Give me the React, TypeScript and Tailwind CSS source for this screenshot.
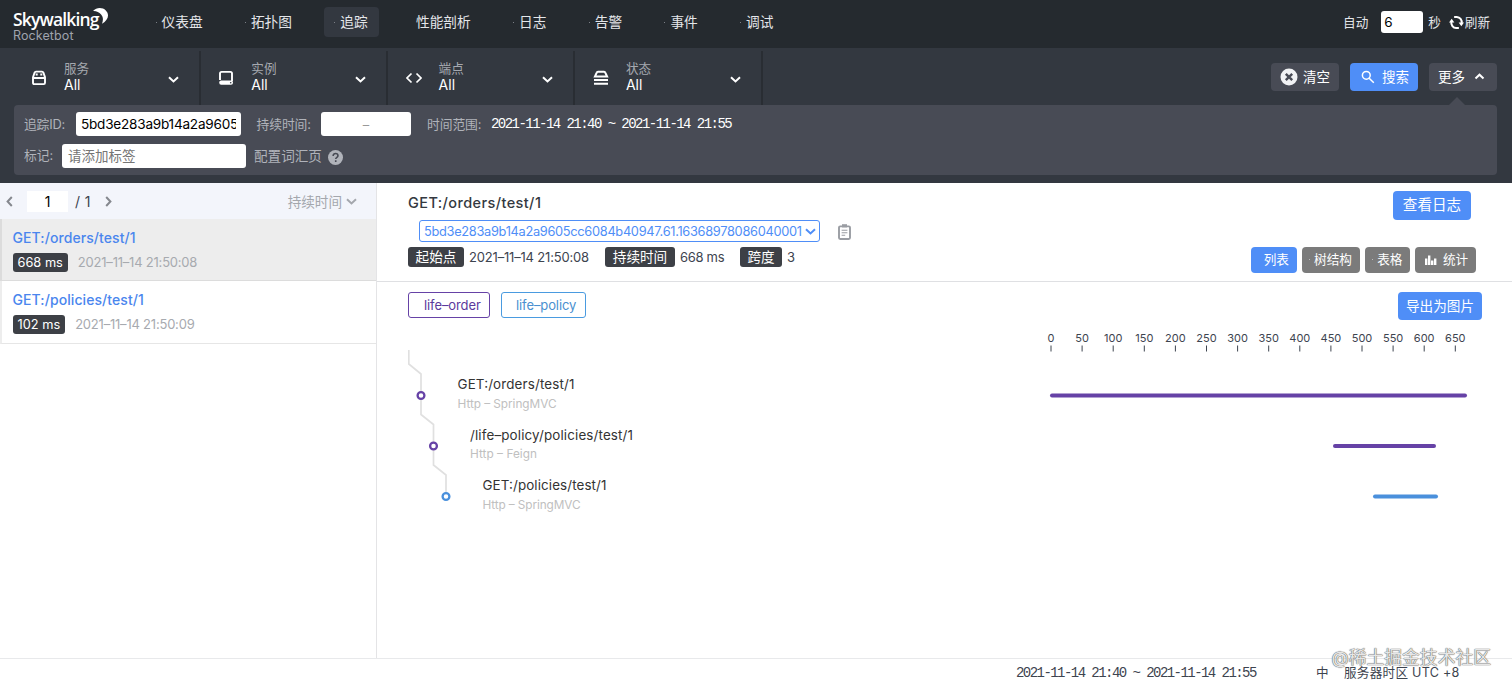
import React, { useState } from 'react';

const navItems = ['仪表盘', '拓扑图', '追踪', '性能剖析', '日志', '告警', '事件', '调试'];

const traces = [
  { name: 'GET:/orders/test/1', duration: '668 ms', time: '2021–11–14 21:50:08' },
  { name: 'GET:/policies/test/1', duration: '102 ms', time: '2021–11–14 21:50:09' },
];

const spans = [
  { name: 'GET:/orders/test/1', layer: 'Http – SpringMVC', x: 12.5, y: 65.5, nameWidth: 117, layerWidth: 99, color: '#6642a6', barX: 642, barWidth: 417 },
  { name: '/life–policy/policies/test/1', layer: 'Http – Feign', x: 25, y: 116, nameWidth: 163, layerWidth: 67, color: '#6642a6', barX: 925, barWidth: 103 },
  { name: 'GET:/policies/test/1', layer: 'Http – SpringMVC', x: 37.5, y: 166.5, nameWidth: 124, layerWidth: 98, color: '#4a90dc', barX: 965, barWidth: 65 },
];

const ticks = [0, 50, 100, 150, 200, 250, 300, 350, 400, 450, 500, 550, 600, 650];

const Chevron: React.FC<{ className?: string; up?: boolean }> = ({ className = '', up }) => (
  <svg className={className} width="11" height="7" viewBox="0 0 11 7" fill="none" stroke="currentColor" strokeWidth="2">
    <path d={up ? 'M1.5 5.5l4-3.8 4 3.8' : 'M1 1.2l4.5 4.2L10 1.2'} />
  </svg>
);

const ServiceIcon = () => (
  <svg width="16" height="16" viewBox="0 0 16 16" fill="none" stroke="currentColor" strokeWidth="1.9">
    <path d="M2 7.2L3.6 2.6Q4 1.6 5 1.6h6q1 0 1.4 1L14 7.2v5.6q0 1.3-1.3 1.3H3.3Q2 14.1 2 12.8zM2 8h12" />
    <path d="M5.7 3.6v2M10.3 3.6v2" strokeWidth="2" />
  </svg>
);

const InstanceIcon = () => (
  <svg width="16" height="16" viewBox="0 0 16 16" fill="none" stroke="currentColor" strokeWidth="1.9">
    <path d="M2 10V3.5Q2 1.9 3.6 1.9h8.8Q14 1.9 14 3.5V11" />
    <rect x="1.2" y="10.6" width="13.8" height="4.2" rx="2" fill="currentColor" stroke="none" />
    <circle cx="12.7" cy="12.7" r="0.8" fill="#333840" stroke="none" />
  </svg>
);

const EndpointIcon = () => (
  <svg width="16" height="16" viewBox="0 0 16 16" fill="none" stroke="currentColor" strokeWidth="1.7">
    <path d="M5.5 3.5L1 8l4.5 4.5M10.5 3.5L15 8l-4.5 4.5" />
  </svg>
);

const StatusIcon = () => (
  <svg width="16" height="16" viewBox="0 0 16 16" fill="none" stroke="currentColor" strokeWidth="2">
    <path d="M1.9 6.6l1.8-4Q4 1.7 5 1.7h6q1 0 1.3.9l1.8 4z" />
    <path d="M1 10.1h14M1 13.8h14" />
  </svg>
);

const filters = [
  { label: '服务', icon: <ServiceIcon /> },
  { label: '实例', icon: <InstanceIcon /> },
  { label: '端点', icon: <EndpointIcon /> },
  { label: '状态', icon: <StatusIcon /> },
];

const Header = () => (
  <header className="flex h-12 items-center bg-[#252a2f] text-[#e4e6ea]">
    <div className="relative ml-[13px] h-full w-[132.5px]">
      <div className="mt-[10px] font-['Open_Sans'] text-[17.5px] leading-[18px] font-semibold tracking-[-0.85px] text-white">Skywalking</div>
      <div className="mt-px text-[12.5px] leading-[13px] tracking-[0.1px] text-[#9fa3ad]">Rocketbot</div>
      <svg className="absolute top-[8px] left-[80px]" width="16" height="16" viewBox="0 0 16 16" fill="#fff">
        <path d="M0 3C3.5-.8 9.5-.8 12.8 2.5c4 4 2.5 9.500-3.800 13.200 1.200-3.200 1.500-6.400-.9-9.200C6 4 3.300 2.800 0 3z" />
      </svg>
    </div>
    <nav className="flex gap-[21.3px]">
      {navItems.map((item) => (
        <a
          key={item}
          className={
            item === '追踪'
              ? 'relative -mt-[4px] flex h-[30px] items-center rounded bg-[#333840] pr-[11px] pl-4 text-[13.7px] leading-5'
              : 'relative -mt-[4px] flex h-[30px] items-center pr-[11px] pl-4 text-[13.7px] leading-5'
          }
        >
          {item !== '性能剖析' && <i className="absolute left-2.5 h-px w-px bg-[#7b7f86]" />}
          {item}
        </a>
      ))}
    </nav>
    <div className="-mt-[4px] mr-[22px] ml-auto flex items-center text-[12.6px]">
      <span className="mt-0.5">自动</span>
      <input className="mr-[5px] ml-[13px] h-[22px] w-[42px] rounded-[3px] bg-white pl-[3px] text-[13.5px] text-black" defaultValue="6" />
      <span className="mt-0.5">秒</span>
      <svg className="mr-px ml-[8px]" width="15" height="15" viewBox="0 0 14 14" fill="none" stroke="#fff" strokeWidth="1.9">
        <path d="M4.8 1.8h2.5A5 5 0 0 1 11.8 7.6M9.2 12.2H6.7A5 5 0 0 1 2.2 6.4" />
        <path d="M9 7h5L11.5 10.4zM5 7h-5L2.5 3.6z" fill="#fff" stroke="none" />
      </svg>
      <span className="mt-0.5">刷新</span>
    </div>
  </header>
);

const Toolbar = () => (
  <section className="h-[135px] bg-[#333840]">
    <div className="ml-[13.5px] flex h-[57px] pt-[3px]">
      {filters.map((f) => (
        <div key={f.label} className="flex w-[187.3px] items-center border-r-2 border-[#292d33] pl-[17.5px] text-white">
          {f.icon}
          <div className="-mt-[2px] ml-[17px] grow">
            <div className="text-[12.6px] leading-4 text-[#a5a8af]">{f.label}</div>
            <div className="text-[14px] leading-4">All</div>
          </div>
          <Chevron className="mt-[3px] mr-[20px]" />
        </div>
      ))}
      <div className="mt-3 mr-[15px] ml-auto flex h-7 gap-[11px] text-[13.5px] text-white">
        <button className="flex w-[68px] items-center rounded bg-[#484b55] pl-[9px]">
          <svg className="mr-[5px]" width="18" height="18" viewBox="0 0 18 18">
            <circle cx="9" cy="9" r="8.5" fill="#f1f2f4" />
            <path d="M5.8 5.8l6.4 6.4M12.2 5.8l-6.4 6.4" stroke="#484b55" strokeWidth="2.4" />
          </svg>
          清空
        </button>
        <button className="flex w-[68px] items-center rounded bg-[#4f8ef7] pl-[11px]">
          <svg className="mr-[7px]" width="14" height="14" viewBox="0 0 14 14" fill="none" stroke="currentColor" strokeWidth="1.5">
            <circle cx="5.3" cy="5.3" r="3.9" />
            <path d="M8.2 8.2l4.6 4.6" />
          </svg>
          搜索
        </button>
        <button className="flex w-[68px] items-center rounded bg-[#484b55] pl-[9px]">
          更多
          <Chevron up className="mb-0.5 ml-[9px]" />
        </button>
      </div>
    </div>
    <div className="relative mr-[15px] ml-[14px] h-[70px] rounded bg-[#484b55] pt-[7px] pl-[10px] text-[12.8px] text-[#b0b3ba]">
      <svg className="absolute -top-[8px] right-[31px]" width="18" height="9" viewBox="0 0 18 9" fill="#484b55">
        <path d="M0 9l9-9 9 9z" />
      </svg>
      <div className="flex h-6 items-center">
        <span className="mt-0.5 w-[52px] tracking-[-0.2px] whitespace-nowrap">追踪ID:</span>
        <input
          className="h-6 w-[165px] rounded-[3px] bg-white px-[5px] text-[13.6px] tracking-[-0.24px] text-black"
          defaultValue="5bd3e283a9b14a2a9605cc6084b40947.61.16368978086040001"
        />
        <span className="mt-px ml-[15.5px] w-[64.5px] tracking-[-0.1px] whitespace-nowrap">持续时间:</span>
        <div className="h-6 w-[90px] rounded-[3px] bg-white text-center leading-[26px] text-[#999]">–</div>
        <span className="mt-px ml-4 w-16 tracking-[-0.1px] whitespace-nowrap">时间范围:</span>
        <span className="font-['Liberation_Mono'] text-[14px] tracking-[-1.54px] whitespace-nowrap text-white">2021-11-14 21:40 ~ 2021-11-14 21:55</span>
      </div>
      <div className="mt-2 flex h-6 items-center">
        <span className="w-[38px]">标记:</span>
        <div className="h-6 w-[184px] rounded-[3px] bg-white pl-[6px] text-[13.5px] leading-6 text-[#757575]">请添加标签</div>
        <span className="ml-2 text-[13.6px]">配置词汇页</span>
        <svg className="mt-[3px] ml-[6px]" width="15" height="15" viewBox="0 0 14 14">
          <circle cx="7" cy="7" r="7" fill="#b0b3ba" />
          <path d="M4.8 5.5c0-1.4 1-2.2 2.3-2.2s2.2.8 2.2 2c0 1.5-2.1 1.6-2.1 3.2M7.2 9.6v1.6" fill="none" stroke="#484b55" strokeWidth="1.5" />
        </svg>
      </div>
    </div>
  </section>
);

const TraceList: React.FC<{ selected: number; onSelect: (index: number) => void }> = ({ selected, onSelect }) => (
  <aside className="w-[377px] shrink-0 border-r border-[#e4e4e6]">
    <div className="flex h-9 items-center bg-[#f3f5fb] pt-px text-[14px] text-[#3d444f]">
      <Chevron className="ml-1 rotate-90 text-[#85888e]" />
      <input className="mr-[7px] ml-[12px] h-[21px] w-[41px] bg-white text-center text-black" defaultValue="1" />
      <span className="tracking-[0.4px]">/ 1</span>
      <Chevron className="ml-[12px] -rotate-90 text-[#85888e]" />
      <span className="mt-px ml-auto text-[13.6px] text-[#a4a7ad]">持续时间</span>
      <Chevron className="mr-[19px] ml-1 text-[#a4a7ad]" />
    </div>
    {traces.map((trace, index) => (
      <div
        key={trace.name}
        onClick={() => onSelect(index)}
        className={
          index === selected
            ? 'h-[62px] border-b border-l-2 border-[#dcdcdc] bg-[#ededed] pt-[10px] pl-[10.5px]'
            : 'h-[63px] border-b border-l-2 border-b-[#e6e6e6] border-l-[#ededed] pt-[10px] pl-[10.5px]'
        }
      >
        <div className="text-[14px] leading-[18px] font-medium tracking-[0.08px] text-[#4a86ee]">{trace.name}</div>
        <div className="mt-[6px] flex items-center">
          <span className="h-[19px] rounded-[3px] bg-[#3d4046] px-[5px] text-[12.8px] leading-[19px] text-white">{trace.duration}</span>
          <span className="ml-[10px] text-[13px] leading-[19px] tracking-[-0.21px] text-[#a7aaaf]">{trace.time}</span>
        </div>
      </div>
    ))}
  </aside>
);

const TraceHeader = () => (
  <div className="flex h-[99px] justify-between border-b border-[#dfe0e3] pl-[31px]">
    <div className="text-[#3d444f]">
      <h5 className="mt-[11px] text-[14.5px] leading-[18px] font-medium tracking-[0.4px] text-[#333840]">GET:/orders/test/1</h5>
      <div className="mt-2 ml-[11px] flex items-center">
        <div className="flex h-[22px] w-[401px] items-center justify-between rounded-[3px] border border-[#4f8ef7] pr-[3px] pl-1 text-[12.8px] whitespace-nowrap text-[#4f8ef7]">
          <span className="pt-0.5 tracking-[-0.3px]">5bd3e283a9b14a2a9605cc6084b40947.61.16368978086040001</span>
          <Chevron className="shrink-0" />
        </div>
        <svg className="mt-0.5 ml-[17.5px]" width="13" height="16" viewBox="0 0 13 16" fill="none" stroke="#9a9da3">
          <rect x="1" y="2.4" width="11" height="12.6" rx="1.2" strokeWidth="1.9" />
          <path d="M4 1.8h5" strokeWidth="3.2" />
          <path d="M3.6 6.2h5.8M3.6 8.7h5.8M3.6 11.2h3.6" strokeWidth="1.1" />
        </svg>
      </div>
      <div className="mt-[5px] flex items-center text-[13px] leading-5">
        <b className="h-5 w-14 rounded-[3px] bg-[#3d4046] text-center text-[13.6px] font-normal text-white">起始点</b>
        <span className="ml-[5px] w-[136px] tracking-[-0.18px]">2021–11–14 21:50:08</span>
        <b className="h-5 w-[70px] rounded-[3px] bg-[#3d4046] text-center text-[13.6px] font-normal text-white">持续时间</b>
        <span className="ml-[5px] w-[60px] tracking-[-0.3px]">668 ms</span>
        <b className="h-5 w-[42px] rounded-[3px] bg-[#3d4046] text-center text-[13.6px] font-normal text-white">跨度</b>
        <span className="ml-[5px]">3</span>
      </div>
    </div>
    <div className="flex flex-col items-end text-white">
      <button className="mt-2 mr-[41px] h-[29px] w-[78px] rounded bg-[#4f8ef7] text-[14.6px]">查看日志</button>
      <div className="mt-[27px] mr-9 flex h-[26px] gap-[5px] text-[12.6px]">
        <button className="w-[45.5px] rounded bg-[#4f8ef7] pl-[5px]">列表</button>
        <button className="relative w-[58px] rounded bg-[#7b7b7b] pl-[5px]"><i className="absolute top-3 left-[7px] h-px w-px bg-[#bbb]" />树结构</button>
        <button className="relative w-[45.5px] rounded bg-[#7b7b7b] pl-[5px]"><i className="absolute top-3 left-[7px] h-px w-px bg-[#bbb]" />表格</button>
        <button className="flex w-[61px] items-center rounded bg-[#7b7b7b] pl-[9px]">
          <svg className="mr-[6px]" width="13" height="12" viewBox="0 0 13 12" fill="#fff">
            <path d="M1 4.5h2.4V11H1zM4 1.5h2.4V11H4zM7 6.500h2.400V11H7zM10 4.500h2.400V11H10z" />
          </svg>
          统计
        </button>
      </div>
    </div>
  </div>
);

const TraceChart = () => (
  <svg className="ml-[31px] block" width="1100" height="220" viewBox="0 0 1100 220">
    {ticks.map((tick, i) => (
      <g key={tick} transform={`translate(${643 + i * 31.1} 20)`}>
        <text y="-8" textAnchor="middle" fontSize="11" fill="#3d444f">{tick}</text>
        <path d="M0 -4.5v6" stroke="#3d444f" />
      </g>
    ))}
    <path d="M.8 20V34L13 44V84.500L25.500 94.500V135L38 145V163" fill="none" stroke="#e0e0e0" strokeWidth="1.7" />
    {spans.map((span) => (
      <g key={span.x}>
        <circle cx={span.x + 0.5} cy={span.y} r="3.4" fill="#fff" stroke={span.color} strokeWidth="2.3" />
        <text x={span.x + 37} y={span.y - 6.4} fontSize="13.4" textLength={span.nameWidth} fill="#333">{span.name}</text>
        <text x={span.x + 37} y={span.y + 12.4} fontSize="11.8" textLength={span.layerWidth} fill="#c0c0c0">{span.layer}</text>
        <rect x={span.barX} y={span.y - 2} width={span.barWidth} height="4" rx="2" fill={span.color} />
      </g>
    ))}
  </svg>
);

const Footer = () => (
  <footer className="relative flex h-[30px] items-center border-t border-[#e8e9eb] pl-[1016px] text-[12.6px] whitespace-nowrap text-[#3d444f]">
    <span className="w-[300px] font-['Liberation_Mono'] text-[14px] tracking-[-1.55px]">2021-11-14 21:40 ~ 2021-11-14 21:55</span>
    <span className="w-7">中</span>
    <span className="tracking-[0.25px]">服务器时区 UTC +8</span>
    <span className="absolute -top-[13px] right-[21px] text-[17.8px] leading-6 text-[#e6e6e6] [text-shadow:0_0_1px_#444,0_0_1px_#666]">@稀土掘金技术社区</span>
  </footer>
);

const App: React.FC = () => {
  const [selected, setSelected] = useState(0);

  return (
    <div className="flex h-[688px] w-[1512px] flex-col overflow-hidden bg-white font-[Inter,'Noto_Sans_CJK_SC',sans-serif]">
      <Header />
      <Toolbar />
      <div className="flex grow">
        <TraceList selected={selected} onSelect={setSelected} />
        <main className="grow">
          <TraceHeader />
          <div className="flex h-12 items-start pt-[10px] pr-[30px] pl-[31px] text-[13px]">
            <span className="flex h-[26px] w-[82px] items-center rounded-[3px] border border-[#6642a6] pt-px pl-[15px] tracking-[-0.1px] text-[#5b3a9c]">life–order</span>
            <span className="ml-[11px] flex h-[26px] w-[85px] items-center rounded-[3px] border border-[#4a9be0] pt-px pl-[14px] tracking-[-0.1px] text-[#4a90d0]">life–policy</span>
            <button className="ml-auto h-7 w-[84px] rounded bg-[#4f8ef7] text-[13.6px] text-white">导出为图片</button>
          </div>
          <TraceChart />
        </main>
      </div>
      <Footer />
    </div>
  );
};

export default App;
